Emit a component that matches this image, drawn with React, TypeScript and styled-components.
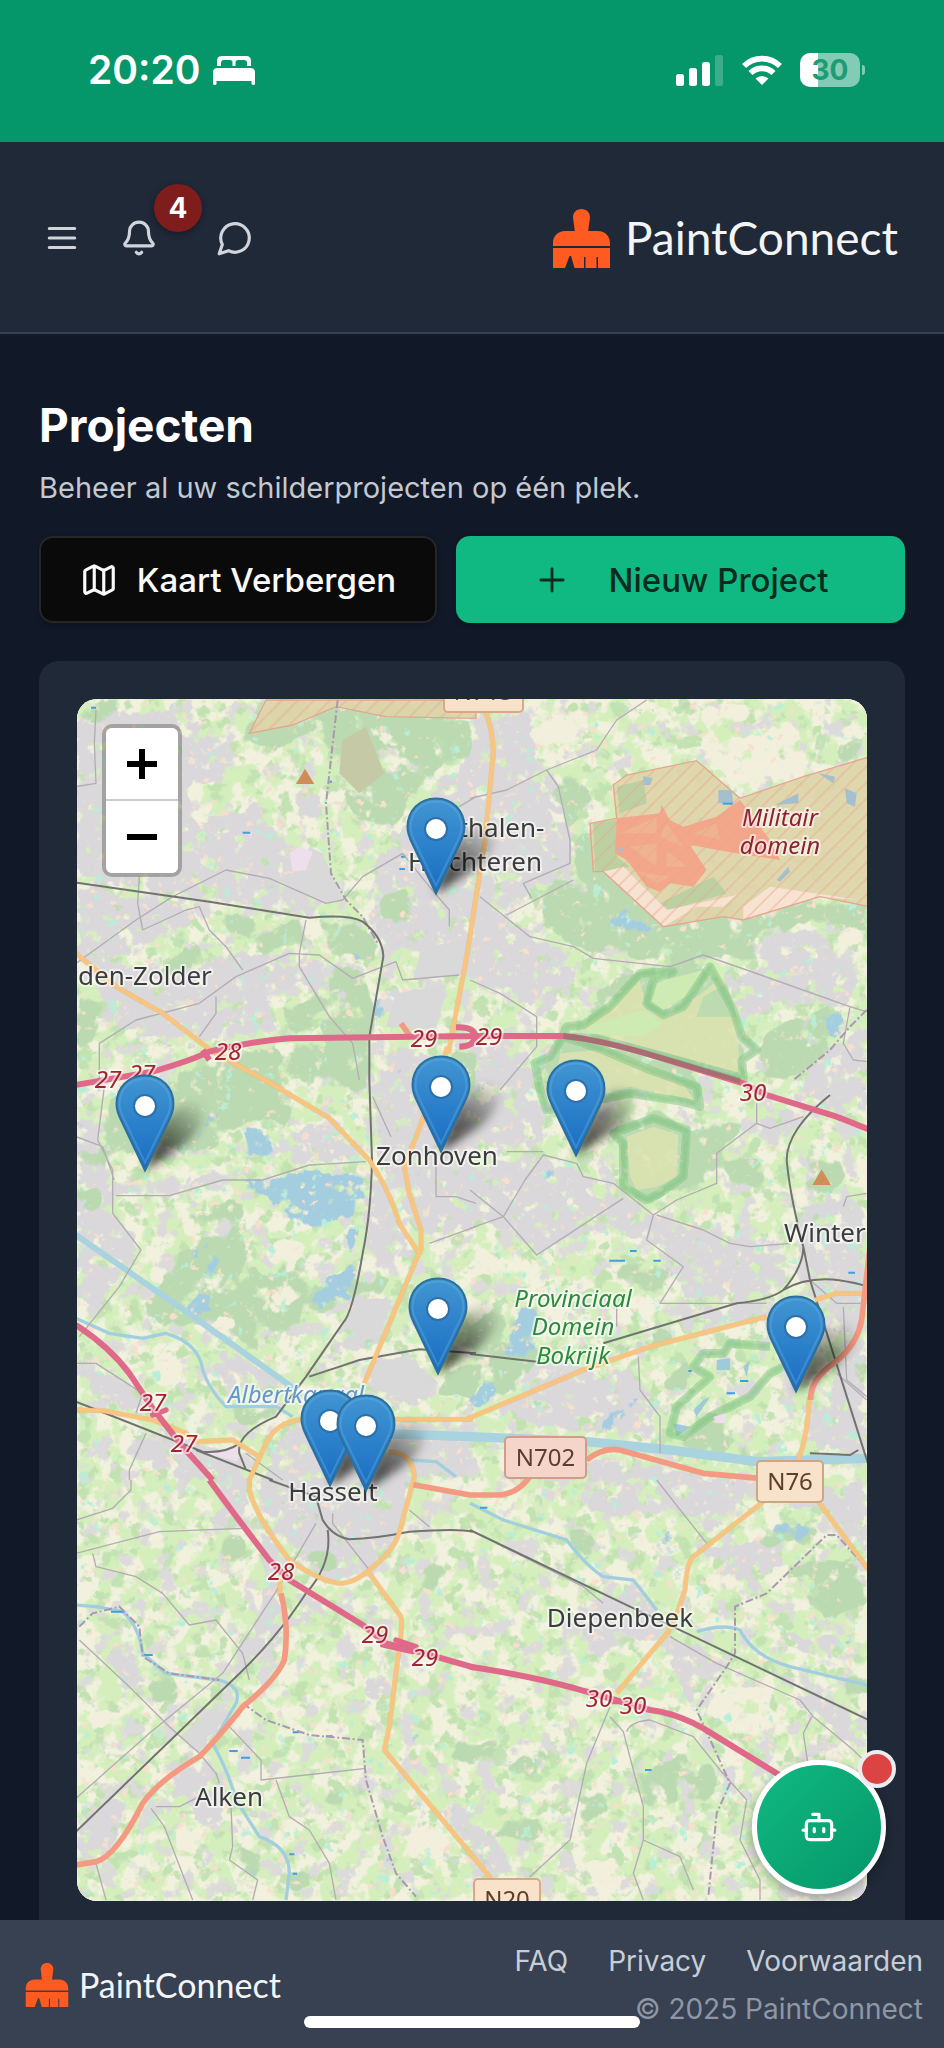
import React from "react";
import styled, { createGlobalStyle } from "styled-components";
import { Bell, Bot, Map as MapIcon, Plus } from "lucide-react";

const GlobalStyle = createGlobalStyle`
  *, *::before, *::after { box-sizing: border-box; }
  body {
    margin: 0;
    background: #111827;
    font-family: Inter, "Liberation Sans", sans-serif;
    -webkit-font-smoothing: antialiased;
  }
  button { font: inherit; color: inherit; border: 0; padding: 0; background: none; cursor: pointer; }
  svg { display: block; flex: none; }
`;

/* ---------- page frame ---------- */

const Page = styled.div`
  display: flex;
  flex-direction: column;
  min-height: 100vh;
`;

const StatusBar = styled.div`
  display: flex;
  align-items: center;
  justify-content: space-between;
  height: 142px;
  padding: 0 84px 2px 88px;
  background: #059669;
  color: #fff;
`;

const StatusGroup = styled.div<{ $gap: number }>`
  display: flex;
  align-items: center;
  gap: ${(p) => p.$gap}px;
`;

const Clock = styled.span`
  font-size: 39px;
  line-height: 48px;
  font-weight: 600;
`;

const Battery = styled.div`
  position: relative;
  width: 60px;
  height: 34px;
  border-radius: 10px;
  background: linear-gradient(90deg, #fff 30%, #82cbb4 30%);
  color: #1b9c73;
  font-size: 28px;
  line-height: 34px;
  font-weight: 700;
  text-align: center;

  &::after {
    content: "";
    position: absolute;
    top: 12px;
    right: -5px;
    width: 3px;
    height: 10px;
    border-radius: 0 4px 4px 0;
    background: #82cbb4;
  }
`;

const Header = styled.header`
  display: flex;
  align-items: center;
  justify-content: space-between;
  height: 192px;
  padding: 2px 46px 0 43px;
  background: #1f2937;
  border-bottom: 2px solid #374151;
`;

const HeaderActions = styled.nav`
  display: flex;
  align-items: center;
  gap: 39px;
  color: #d1d5db;
`;

const IconButton = styled.button<{ $spaced?: boolean }>`
  position: relative;
  display: flex;
  margin-right: ${(p) => (p.$spaced ? 19 : 0)}px;
`;

const Badge = styled.span`
  position: absolute;
  left: 34px;
  bottom: 25px;
  width: 48px;
  height: 48px;
  border-radius: 50%;
  background: #7f1d1d;
  color: #fff;
  font-size: 28px;
  line-height: 48px;
  font-weight: 700;
  text-align: center;
  box-shadow: 0 2px 6px rgba(0, 0, 0, 0.35);
`;

const Brand = styled.a<{ $small?: boolean }>`
  display: flex;
  align-items: center;
  gap: ${(p) => (p.$small ? 10 : 14)}px;
  color: #f3f4f6;
  text-decoration: none;
  font-family: Lato, sans-serif;
  font-size: ${(p) => (p.$small ? 34 : 46)}px;
  line-height: ${(p) => (p.$small ? 44 : 60)}px;
`;

const Main = styled.main`
  display: flex;
  flex-direction: column;
  flex: 1;
  padding: 62px 39px 0;
`;

const Title = styled.h1`
  margin: 0;
  color: #fff;
  font-size: 46px;
  line-height: 58px;
  font-weight: 700;
`;

const Subtitle = styled.p`
  margin: 14px 0 0;
  color: #c3c8d1;
  font-size: 29px;
  line-height: 40px;
`;

const Actions = styled.div`
  display: grid;
  grid-template-columns: 398fr 449fr;
  gap: 19px;
  margin-top: 28px;
`;

const ActionButton = styled.button<{ $primary?: boolean }>`
  display: flex;
  align-items: center;
  justify-content: center;
  gap: ${(p) => (p.$primary ? 38 : 19)}px;
  height: 87px;
  border-radius: 14px;
  border: ${(p) => (p.$primary ? "0" : "2px solid #262626")};
  background: ${(p) => (p.$primary ? "#10b981" : "#0a0a0a")};
  color: ${(p) => (p.$primary ? "#0b2a20" : "#fafafa")};
  font-size: 33px;
  line-height: 40px;
  font-weight: 500;
  box-shadow: 0 2px 5px rgba(0, 0, 0, 0.25);
`;

const MapCard = styled.section`
  flex: 1;
  margin-top: 38px;
  padding: 38px 38px 19px;
  border-radius: 20px 20px 0 0;
  background: #1f2937;
`;

const MapFrame = styled.div`
  position: relative;
  overflow: hidden;
  aspect-ratio: 790 / 1202;
  border-radius: 20px;
  background: #eff1dc;
`;

const MapDrawing = styled.svg`
  width: 100%;
  height: 100%;
`;

const ZoomControl = styled.div`
  position: absolute;
  top: 25px;
  left: 25px;
  display: flex;
  flex-direction: column;
  border: 4px solid rgba(0, 0, 0, 0.25);
  background-clip: padding-box;
  border-radius: 10px;
`;

const ZoomButton = styled.button`
  display: flex;
  align-items: center;
  justify-content: center;
  width: 72px;
  height: 72px;
  background: #fff;
  color: #000;

  &:first-child {
    height: 73px;
    border-bottom: 2px solid #ccc;
    border-radius: 6px 6px 0 0;
  }
  &:last-child {
    border-radius: 0 0 6px 6px;
  }
`;

const PinButton = styled.button<{ $x: number; $y: number }>`
  position: absolute;
  left: ${(p) => (p.$x / 790) * 100}%;
  top: ${(p) => (p.$y / 1202) * 100}%;
  width: 60px;
  height: 98px;
  transform: translate(-50%, -100%);

  svg { overflow: visible; }
`;

const ChatButton = styled.button`
  position: fixed;
  right: 58px;
  bottom: 154px;
  display: flex;
  align-items: center;
  justify-content: center;
  width: 134px;
  height: 134px;
  border: 5px solid #fff;
  border-radius: 50%;
  background: linear-gradient(135deg, #10b981, #059669);
  color: #fff;
  box-shadow: 0 4px 12px rgba(0, 0, 0, 0.3);
`;

const ChatDot = styled.span`
  position: absolute;
  top: -15px;
  right: -15px;
  width: 38px;
  height: 38px;
  border: 4px solid #ececf0;
  border-radius: 50%;
  background: #dc4444;
`;

const Footer = styled.footer`
  position: relative;
  display: flex;
  align-items: center;
  justify-content: space-between;
  height: 128px;
  padding: 2px 21px 0 25px;
  background: #374151;
`;

const FooterInfo = styled.div`
  display: flex;
  flex-direction: column;
  align-items: flex-end;
  gap: 12px;
  color: #8f97a5;
  font-size: 28px;
  line-height: 36px;
`;

const FooterLinks = styled.nav`
  display: flex;
  gap: 40px;
`;

const FooterLink = styled.a`
  color: #c9ced6;
  text-decoration: none;
`;

const HomeIndicator = styled.div`
  position: absolute;
  left: 50%;
  bottom: 20px;
  width: 336px;
  height: 12px;
  border-radius: 6px;
  background: #fff;
  transform: translateX(-50%);
`;

/* ---------- icons ---------- */

const BrushLogo = ({ size }: { size: number }) => (
  <svg width={size} height={size} viewBox="0 0 57 59" fill="#ff5a1f" aria-hidden="true">
    <path d="M20 8.500C20 3.500 23.500 0 28.500 0S37 3.500 37 8.500L35.200 22H45C52 22 57 27 57 34V37H0V34C0 27 5 22 12 22H21.800Z" />
    <path d="M0 39H57V59H45V48H43.500V59H32.500V48H31V59H21.500L18 47H16.500L12 59H0Z" />
  </svg>
);

const BedIcon = () => (
  <svg width="42" height="29" viewBox="0 0 42 29" fill="#fff" aria-hidden="true">
    <path d="M4 10V5Q4 0 9 0H33Q38 0 38 5V10H34V7Q34 4 31 4H25Q22.500 4 22.500 6.500V10H19.500V6.500Q19.500 4 17 4H11Q8 4 8 7V10Z" />
    <path d="M0 16Q0 12 5 12H37Q42 12 42 16V28Q42 29 40.500 29T38.500 28V25H3.500V28Q3.500 29 2 29T0 28Z" />
  </svg>
);

const SignalIcon = () => (
  <svg width="48" height="32" viewBox="0 0 48 32" fill="#fff" aria-hidden="true">
    <rect x="0" y="20" width="8" height="12" rx="2.500" />
    <rect x="13" y="14" width="8" height="18" rx="2.500" />
    <rect x="26" y="8" width="8" height="24" rx="2.500" />
    <rect x="39" y="1" width="8" height="31" rx="2.500" opacity=".22" />
  </svg>
);

const WifiIcon = () => (
  <svg width="40" height="30" viewBox="0 0 40 30" aria-hidden="true">
    <g fill="none" stroke="#fff" strokeWidth="5.800">
      <path d="M2 11A25.500 25.500 0 0 1 38 11" />
      <path d="M8.500 18A16.500 16.500 0 0 1 31.500 18" />
    </g>
    <path d="M13.500 23.600Q20 18.600 26.500 23.600L20 30Z" fill="#fff" />
  </svg>
);

const iconStroke = {
  width: 38,
  height: 38,
  viewBox: "0 0 24 24",
  fill: "none",
  stroke: "currentColor",
  strokeWidth: 2,
  strokeLinecap: "round" as const,
  strokeLinejoin: "round" as const,
};

const MenuIcon = () => (
  <svg {...iconStroke}>
    <path d="M4 6H20M4 12H20M4 18H20" />
  </svg>
);

const MessageIcon = () => (
  <svg {...iconStroke}>
    <path d="M7.900 20A9 9 0 1 0 4 16.100L2 22Z" />
  </svg>
);

const PinIcon = () => (
  <svg width="60" height="98" viewBox="0 0 60 98" aria-hidden="true">
    <path d="M29 97L44 56Q64 22 86 30Q98 46 68 72Z" fill="url(#pin-shade)" filter="url(#pin-shadow)" />
    <path
      d="M30 1.500C13 1.500 1.500 14 1.500 30C1.500 36 3.500 41 6 46L30 96.500L54 46C56.500 41 58.500 36 58.500 30C58.500 14 47 1.500 30 1.500Z"
      fill="url(#pin-body)"
      stroke="#2b6f9f"
      strokeWidth="2"
    />
    <path
      d="M30 4.500C15 4.500 4.500 15.500 4.500 30C4.500 35.500 6.500 40 9 45L30 88.500L51 45C53.500 40 55.500 35.500 55.500 30C55.500 15.500 45 4.500 30 4.500Z"
      fill="none"
      stroke="#6fb2e0"
      strokeWidth="2"
      opacity=".35"
    />
    <circle cx="30" cy="32" r="11" fill="#fff" stroke="#2c70aa" strokeWidth="2" />
  </svg>
);

/* ---------- map data ---------- */

/* Every tile is drawn on a 1200-unit grid at one third of its scale. */
const tiles = {
  nw: [-1, -9],
  ne: [393, -9],
  w: [-1, 381],
  e: [393, 381],
  sw: [-1, 781],
  se: [393, 781],
} as const;
type TileId = keyof typeof tiles;
type Shapes = Partial<Record<TileId, string>>;

const Layer = ({ shapes, ...rest }: { shapes: Shapes } & React.SVGProps<SVGGElement>) => (
  <g {...rest}>
    {(Object.keys(shapes) as TileId[]).map((id) => (
      <path key={id} d={shapes[id]} transform={`translate(${tiles[id][0]} ${tiles[id][1]}) scale(.33333)`} />
    ))}
  </g>
);

const forest: Shapes = {
  nw: "M0 30H140L90 100L0 90ZM540 30H1110V80L1200 80L1180 180L1090 240L1000 330L960 420L850 400L790 300L780 200L700 130L600 190L500 140ZM400 660L540 670L570 710L490 730L400 690ZM500 730L690 690L690 760L560 790ZM720 690L880 700L915 780L860 810L750 780ZM240 840L370 760L400 820L250 880ZM610 950L740 920L750 1010L640 1040ZM0 930L80 950L60 1050L0 1100ZM760 820L870 840L900 960L870 1200H780L740 1050ZM200 1190L300 1150L520 1080L700 1060L870 1100V1170L700 1200ZM900 650L1020 550L1010 700L940 700ZM1130 1090L1200 1080V1200H1130Z",
  ne: "M230 570L430 540L580 690L760 640L1190 640V760L1060 700L870 720L860 810L720 800L620 830L400 800L300 760L210 700ZM300 460L370 400L440 540L330 570ZM1100 180L1190 130V200L1120 210ZM880 1020L1080 950L1140 1020L1000 1150L870 1180ZM440 850L600 830L720 810L820 1000L830 1160L600 1130L300 1020ZM200 1120L290 1040L500 1090L700 1170V1200H200ZM240 300L300 230L380 330L300 420Z",
  w: "M60 250L100 60L300 0H620L680 60L640 130L500 130L360 230L260 200ZM0 190L80 240L0 280ZM310 400L480 350L500 410L340 430ZM200 680L300 520L480 430L560 600L640 540L720 620L830 590L830 660L720 700L640 740L560 830L430 740L260 740ZM450 980L600 980L620 1000L520 1050L460 1020ZM0 330L80 310L90 380L0 420ZM840 590L960 580L900 640L830 640ZM1090 880L1200 840V960L1100 940Z",
  e: "M640 160L740 120L830 130L750 220L740 310L640 330ZM760 230L860 230L900 330L770 300ZM0 720L110 700L190 760L200 860L80 960L0 880ZM380 600L540 520L620 570L560 650L390 640ZM420 800L600 740L610 780L430 830ZM540 880L660 850L640 930L530 940ZM600 1080L720 990L830 1090L840 1120L660 1120ZM420 0H700V60L640 70ZM430 130L560 90L660 140L640 310L540 380L450 310ZM1000 220L1120 240L1110 340L1010 340ZM1130 840H1190V940Z",
  sw: "M370 190L500 170L510 240L430 250ZM1130 770L1200 770V860L1130 830ZM680 180L790 230L760 280L700 240ZM500 1100L570 1130L550 1200L480 1190ZM740 940L820 930L810 980L740 980ZM200 600L330 590L300 680L220 660ZM1020 250L1100 280L1080 340L1030 320ZM640 1170L720 1160L700 1230L640 1240Z",
  se: "M100 850L210 790L260 830L170 900L110 890ZM550 870L640 810L740 850L730 960L640 980L590 950ZM90 1020L210 1000L220 1070L100 1080ZM960 260L1190 230V380L1060 420L1000 360ZM780 180L950 130L1060 150L1000 190L850 200ZM270 120L400 190L390 240L310 220ZM1060 570L1190 590V660L1120 630ZM500 850L560 870L560 1000L510 980ZM0 800L60 760L80 820L0 850ZM300 950L440 940L420 1000L330 1030Z",
};

const urban: Shapes = {
  nw: "M60 60L300 60L470 170L480 260L340 300L350 400L560 330L640 500L720 470L760 630L700 680L400 630L0 570V90ZM640 330L740 300L750 400H650ZM900 500L960 420L1180 180L1200 220V800L1050 780L920 790L880 690ZM1040 760L1190 760V860L1010 870ZM950 900L1110 880L1080 1020L930 1000ZM0 590L380 640L340 700L200 780L150 800L0 800ZM0 800L280 840L500 780L700 800L860 900V960L740 900L600 900L580 1020L400 1060L250 1050L80 1010L60 900ZM420 790L660 790L620 900L430 920ZM1080 1100L1180 1100V1200H1000L900 1180L920 1060Z",
  ne: "M0 70L190 60L210 230L270 280L310 480L300 560L100 660L180 740L310 790L310 860L240 980L190 970L0 880ZM880 720L1060 720L1170 860L1150 950L960 940L820 980L760 860L860 830ZM0 1050L180 1060L200 1200H0ZM1030 1110L1190 1000V1200H970Z",
  w: "M0 60L60 100L110 300L120 400L200 500L130 590L60 700L0 650ZM650 130L760 130L870 240L600 250L500 290L300 340H120L110 310L350 290L640 240ZM890 0L1040 0L1200 60V440L1060 490L1000 420L900 240ZM870 250L940 330L1000 500L1020 540L900 560L860 480ZM830 640L960 650L920 800L830 820L730 850L810 710ZM880 840L1000 830L1080 920L980 990L860 950ZM430 800L600 880L660 930L440 920L400 870ZM680 1030L1200 1030V1200H560L600 1080ZM0 860L130 880L230 1010L60 960ZM180 1050L350 1080L500 1120L520 1200H340L150 1130Z",
  e: "M0 60L160 30L230 100L200 210L60 220L0 180ZM0 260L230 230L380 290L560 410L530 480L380 450L200 520L60 430L0 420ZM560 410L720 450L930 480L940 600L900 650L640 660L630 560L550 500ZM860 130L1080 0H1190V100L1000 110L940 220L880 170ZM1000 360L1190 350V1170L1120 1110L1060 960L1120 800L1060 680L1000 620L980 490ZM240 860L500 870L560 1020L540 1080L340 1060L60 1020ZM640 680L880 660V710L640 780ZM190 1150L430 1130L640 1170L860 1190V1200H190ZM1000 960L1130 960L1140 1110L1000 1110Z",
  sw: "M520 0H1010L980 160L880 270L760 310L660 230L560 120ZM540 140L640 240L600 350L660 440L560 540L430 600L520 450L570 320ZM640 330L720 350L760 420L680 420ZM860 370L960 420L950 480L870 400ZM300 780L440 670L460 700L400 800L340 850ZM250 850L400 830L470 960L420 1070L300 960ZM0 1010L130 950L160 980L100 1130L0 1140ZM100 490L180 500L220 620L160 630L90 560ZM510 150L400 130L430 0H520ZM860 600L950 570L940 680L880 660ZM1080 980L1200 960V1120L1140 1080Z",
  se: "M560 0H870L720 170L560 60ZM880 70L1190 0V240L1060 90ZM320 370L500 310L600 430L560 490L460 480L400 540L310 460ZM560 470L640 480L800 560L640 600L590 560ZM650 200L960 170L940 240L850 340L750 260ZM960 460L1120 460L1130 530L960 520ZM830 540L1190 700V830L1030 710L960 640ZM0 1000L130 1130L180 1190H0ZM620 560L700 640L680 700L640 660ZM300 60L440 0L560 60L450 130ZM1000 1180H1190V1270H1000Z",
};

const water: Shapes = {
  nw: "M780 725L850 740L840 765L790 755ZM810 785L880 800L870 820L810 805ZM900 900L935 915L910 1030L885 1010ZM800 95L815 100L812 150L800 145ZM80 1170L110 1160L80 1200H50Z",
  ne: "M420 665Q460 650 480 680Q540 680 540 710Q530 740 500 725Q430 730 420 690ZM1060 975Q1090 950 1130 980Q1130 1020 1090 1050Q1060 1030 1060 975ZM975 990L990 1000L980 1030L970 1020Z",
  w: "M460 310L700 270L880 290L840 400L740 440L620 410L570 350ZM500 140L560 120L560 180L620 190L560 240L500 200ZM330 160L430 80L445 110L360 160ZM700 660L740 600L840 550L830 650L730 690ZM310 670L400 640L430 690L350 720ZM400 520L450 500L400 620L380 580ZM810 460L860 430L840 500L800 510ZM0 110L80 140L60 160L0 150ZM330 520L400 490L410 510L340 540ZM480 430L520 420L490 480Z",
  e: "M0 920L90 895L60 970L0 980ZM380 1040L440 970L510 950L430 1060ZM140 680L210 680L200 820L90 830L130 740ZM520 570L620 560L600 590L540 590ZM190 290L260 265L240 300Z",
  sw: "M1010 760L1040 770L1030 785ZM190 500L215 480L205 530Z",
  se: "M880 150L940 130L1050 130L1030 160L890 165ZM540 200L590 160L640 145L580 200ZM605 265H630V310H605Z",
};

const cream: Shapes = {
  nw: "M600 220L630 200L640 230L610 250ZM640 850L680 830L670 900ZM350 350L400 340L410 380ZM900 120L960 125L950 170L900 160Z",
  ne: "M160 120L230 60H330L320 200L230 210ZM680 150L900 110L1000 130L1040 230L800 320L650 110ZM700 60L850 40L830 110L700 100ZM1100 740L1190 720V770H1100Z",
  w: "M560 500L640 470L690 510L660 570L600 580ZM570 650L640 620L690 640L620 710L560 690ZM200 560L280 560L260 620L210 610ZM310 410L400 430L360 470ZM180 860L260 820L330 830L350 950L200 900ZM390 710L480 720L460 770L400 750Z",
  e: "M860 240L900 260L950 340L910 340ZM0 520L80 520L130 560L0 600ZM160 610L260 620L220 660H150Z",
  sw: "M960 1080L1050 1000L1130 1080L1100 1150L1000 1130ZM390 260L500 280L470 310L380 300ZM0 700L100 690L90 780L0 770ZM280 1030L400 1080L380 1150L300 1100Z",
  se: "M740 640L820 600L910 640L890 790L780 750L700 690ZM730 280L800 270V340L730 340ZM0 460L100 480L90 540L0 530ZM330 1150L440 1120L460 1240L320 1250ZM1070 290L1090 250L1130 270L1110 310Z",
};

const reserveOutline: Shapes = {
  ne: "M290 1010L340 1005L420 950L510 850L610 845L550 870L530 940L580 975L640 950L720 830L790 960L815 1040L860 1080L815 1110L820 1165L560 1095L380 1045L280 1040ZM280 1040L240 1100L195 1120L210 1200L230 1260L480 1210L640 1235L690 1250L680 1190L540 1140L400 1080Z",
  e: "M430 160L550 115L650 150L640 290L570 340L530 360L460 320L460 190ZM900 800L780 790L760 820L700 820L670 860L720 890L620 980L600 1060L640 1070L720 1010L840 950L900 880L960 850",
};

const minor: Shapes = {
  nw: "M0 290L60 280L55 160L60 60M0 820L180 690L290 620L450 540L580 565L750 640L800 630L860 560L980 490M190 560L185 640L200 720M200 720L330 660L370 650L400 720L450 770L500 840M690 690L670 790V830L760 980L830 1060L850 1170M70 1200V1060L180 990L370 940L480 860L640 790L730 795L830 865L960 815L980 870L1150 855M1150 350L1200 320M980 490L1060 590L1120 660V710M370 1040L420 970V920",
  ne: "M0 325L110 300L230 240L380 180L440 90L530 30M230 240L265 290L300 450V520L160 580L185 625M310 570L110 675M30 620L180 740L310 770L370 805L600 830L700 795L830 840L1140 950L1190 965M0 870L90 910L200 980V1070L90 1200M1140 950L1120 1060L1150 1110L1190 1115",
  w: "M85 20L65 180L110 270V400L195 510L130 620L10 770M0 170L80 200L115 300M120 347H280L440 300H560L700 255L870 245M1080 240V350H1140L1200 370M1060 490L1200 440M890 50L945 170M0 850H60L200 940L180 1000M210 1060L160 1170V1200M510 1120L620 1200",
  e: "M0 330L100 410L200 525L460 355M0 445L100 410L165 300L220 225L320 250L340 290L430 310L550 405L620 360L740 310V220L860 130L900 145L1000 110M860 130V70M550 405L530 480L640 560L570 670H890M560 405L700 450L780 490L840 500L960 490M505 830L510 930L570 1010V1120M1190 340L1130 350L1120 380M440 680V740M110 215H220M1120 680L1130 900L1190 950M1020 600L1100 670H1190M1100 880L1190 960",
  sw: "M0 120L110 85L165 30V0M0 220L250 155L500 145M720 130L600 335L440 580L220 760L0 955M50 220L60 260L180 290L260 340L340 435L420 420L500 520L520 600M10 480L160 620L280 740L370 820L420 880L430 910M460 740L555 840V900L870 865M880 270L770 130V100M600 900L640 1010L700 1050L760 1150L780 1260M465 980L470 1100L460 1140L545 1200L530 1260M240 980H310L370 950M225 985L265 1040L350 1260M60 1150L90 1260M1000 90L1060 140",
  se: "M420 680L350 850L300 1080L180 1190M420 710L460 755L490 870L520 980V1080L490 1180L520 1260M470 755Q480 725 540 720L670 770L750 870L830 960L810 1080L870 1200V1260M600 470L740 550L990 660L1030 710L1150 810L1180 840M1025 710L1000 760L1015 860M560 0L710 190M80 190L340 320L400 370M520 1080L630 1130L670 1230",
};

const boundary: Shapes = {
  nw: "M785 30L750 340L765 550L810 630L860 680L905 760",
  ne: "M1190 960L1140 1010L1080 1080L970 1170",
  sw: "M10 440L50 400L130 380L190 440L200 530L280 580L430 600M500 670L570 720L700 765L860 780L870 900L920 1070L960 1180L1020 1250",
  se: "M1190 265L1100 165H1070L890 340L795 380V520L770 560L680 690L780 910L740 1000L715 1250",
};

const rivers: Shapes = {
  w: "M0 715L100 760L200 775L270 760Q370 790 380 870Q400 930 450 980L600 980L650 1010M1000 1140L1080 1145L1140 1190",
  sw: "M0 375L60 380L140 395Q190 440 200 520L270 580L430 600Q500 620 480 670L410 790Q460 880 480 960L550 1070Q640 1100 640 1180L630 1260",
  se: "M0 70L100 120L290 180Q350 260 400 290L490 300L560 390M680 455Q760 430 810 450Q850 530 960 560L1190 615",
};

const canal: Shapes = {
  w: "M0 465L380 730L660 930",
};

const wideCanal: Shapes = {
  e: "M-240 1062L0 1070L350 1085L600 1110L860 1145L1200 1135",
};

const rail: Shapes = {
  nw: "M0 578L400 635L700 683Q820 672 860 695Q920 740 922 800L880 1040V1170",
  w: "M880 0L888 240Q885 400 860 520Q830 700 800 730L690 890L600 1010Q480 1060 490 1120L510 1170M700 890L850 840L1030 808L1200 820M0 965L380 1115Q450 1120 490 1090M360 1110L590 1200",
  e: "M0 822L200 845M400 790L800 670Q900 660 940 630Q1000 560 1000 500M940 630Q1040 570 1200 622M1080 45Q950 150 950 240Q960 350 1000 500L1020 600L1200 1170M1020 1120L1140 1125L1165 1110",
  sw: "M580 0L720 50L740 120Q770 170 820 178Q900 175 1000 155Q1150 145 1190 155M755 150Q770 250 690 340Q600 480 460 610L0 1055",
  se: "M0 150L480 380L640 455L1200 722",
};

const secondary: Shapes = {
  nw: "M0 790L120 890L260 970L410 1085L620 1200",
  ne: "M45 60Q75 140 68 210L45 450L-10 800L-65 1090",
  w: "M560 -5L760 115L880 240Q940 330 970 430L1025 515M1115 -100L1085 0L1020 170L985 260L1000 340L1035 450V510L1020 540L865 910M1190 1018H680Q600 1025 570 1090L520 1200V1230Q540 1310 640 1440Q740 1510 800 1510Q840 1505 880 1470Q960 1410 975 1340L1015 1190Q1010 1120 940 1115M0 990L80 992L230 1020L330 1060L360 1085L470 1080L550 1130",
  e: "M-10 1018L340 870L540 800L890 710M1035 660L1100 640H1200M1018 950Q1015 1060 985 1140",
  sw: "M880 280L975 410Q980 440 970 500L940 740L925 810L1200 1140L1245 1195M612 290V345",
  se: "M880 65L670 230Q650 250 645 330L625 390L595 455L440 640M1045 65L1200 275",
};

const primary: Shapes = {
  e: "M1200 500L1175 720Q1160 800 1090 850Q1020 900 1022 960M-170 1214L0 1245H80Q140 1245 180 1190M350 1140Q400 1100 450 1110L700 1180L870 1195",
  sw: "M615 340Q640 440 625 540Q600 600 500 680Q430 770 370 830Q250 900 200 970Q120 1130 60 1145L0 1155",
  nw: "M975 1000L1000 1035",
};

const motorway: Shapes = {
  nw: "M0 1185L230 1145Q350 1110 400 1085Q520 1055 640 1045L1200 1038M380 1080L400 1110M1140 1012Q1196 1010 1198 1040Q1196 1068 1150 1070",
  ne: "M0 1038H280Q400 1050 560 1100L820 1180L890 1215L1100 1280L1200 1320",
  w: "M0 735Q100 800 160 880L230 985L320 1100L410 1200",
  sw: "M400 0Q480 110 580 240L640 300L860 435L930 490L1010 510L1195 563",
  se: "M0 560Q200 590 350 635L540 690Q620 700 700 745L920 880L1100 970",
};

const ramps: Shapes = {
  w: "M230 1005L270 990",
  sw: "M920 495L1010 515M960 480L1020 500",
  se: "M430 665H455",
};

const militaryArea: Shapes = {
  ne: "M360 400L440 385L430 285L470 255L680 212L810 325L1000 260L1200 200V650L1050 620L820 690L760 680L580 710L400 545H370Z",
  nw: "M570 30L520 130L650 105L780 50L930 80L1200 85V30Z",
};

const placeLabels: { x: number; y: number; text: string; start?: boolean }[] = [
  { x: 1, y: 286, text: "den-Zolder", start: true },
  { x: 399, y: 138, text: "Houthalen-" },
  { x: 398, y: 172, text: "Helchteren" },
  { x: 360, y: 466, text: "Zonhoven" },
  { x: 707, y: 543, text: "Winter", start: true },
  { x: 256, y: 802, text: "Hasselt" },
  { x: 152, y: 1107, text: "Alken" },
  { x: 543, y: 928, text: "Diepenbeek" },
];

const areaLabels = [
  { x: 703, y: 127, text: "Militair", fill: "#8c2332" },
  { x: 703, y: 155, text: "domein", fill: "#8c2332" },
  { x: 496, y: 608, text: "Provinciaal", fill: "#2c8a3c" },
  { x: 496, y: 636, text: "Domein", fill: "#2c8a3c" },
  { x: 496, y: 665, text: "Bokrijk", fill: "#2c8a3c" },
  { x: 219, y: 704, text: "Albertkanaal", fill: "#6498cc" },
];

const exits: [number, number, string][] = [
  [151, 361, "28"],
  [31, 389, "27"],
  [65, 383, "27"],
  [347, 348, "29"],
  [412, 346, "29"],
  [676, 402, "30"],
  [76, 712, "27"],
  [107, 753, "27"],
  [204, 881, "28"],
  [298, 944, "29"],
  [348, 967, "29"],
  [522, 1008, "30"],
  [556, 1015, "30"],
];

const shields = [
  { x: 428, y: 738, w: 81, text: "N702", fill: "#f5d5ca", stroke: "#d09c8c" },
  { x: 680, y: 762, w: 66, text: "N76", fill: "#f8e2c9", stroke: "#c9a985" },
  { x: 397, y: 1180, w: 66, text: "N20", fill: "#f8e2c9", stroke: "#d9a888" },
  { x: 367, y: -28, w: 79, text: "N715", fill: "#f8e2c9", stroke: "#d9a888" },
];

const pins: [number, number, string][] = [
  [359, 196, "Houthalen-Helchteren"],
  [364, 454, "Zonhoven"],
  [68, 473, "Heusden-Zolder"],
  [499, 458, "Zonhoven oost"],
  [361, 676, "Hasselt noord"],
  [719, 694, "Genk"],
  [253, 788, "Hasselt centrum"],
  [289, 793, "Hasselt"],
];

/* Turns soft shapes into ragged land-cover patches of one colour. */
const CoverFilter = ({
  id,
  rgb,
  seed,
  frequency,
  weight,
  threshold,
}: {
  id: string;
  rgb: [number, number, number];
  seed: number;
  frequency: number;
  weight: number;
  threshold: number;
}) => {
  const [r, g, b] = rgb.map((v) => v / 255);
  return (
    <filter id={id} filterUnits="userSpaceOnUse" x="0" y="0" width="790" height="1202" colorInterpolationFilters="sRGB">
      <feTurbulence type="fractalNoise" baseFrequency={frequency} numOctaves={4} seed={seed} />
      <feColorMatrix values="0 0 0 0 0  0 0 0 0 0  0 0 0 0 0  1 0 0 0 0" result="noise" />
      <feGaussianBlur in="SourceAlpha" stdDeviation="4" result="density" />
      <feComposite in="noise" in2="density" operator="arithmetic" k1="0" k2="1" k3={weight} k4="0" />
      <feColorMatrix values={`0 0 0 0 ${r}  0 0 0 0 ${g}  0 0 0 0 ${b}  0 0 0 9 ${-9 * threshold}`} />
    </filter>
  );
};

const RegionMap = () => (
  <MapDrawing viewBox="0 0 790 1202" preserveAspectRatio="xMidYMid slice" role="img" aria-label="Kaart met projecten">
    <defs>
      <CoverFilter id="cover-grass" rgb={[212, 239, 188]} seed={4} frequency={0.045} weight={0.3} threshold={0.58} />
      <CoverFilter id="cover-scrub" rgb={[194, 226, 178]} seed={21} frequency={0.06} weight={0.3} threshold={0.71} />
      <CoverFilter id="cover-street" rgb={[220, 218, 219]} seed={70} frequency={0.05} weight={0.3} threshold={0.73} />
      <CoverFilter id="cover-forest" rgb={[188, 218, 177]} seed={9} frequency={0.04} weight={0.5} threshold={0.78} />
      <CoverFilter id="cover-urban" rgb={[218, 216, 218]} seed={15} frequency={0.07} weight={0.5} threshold={0.8} />
      <CoverFilter id="cover-water" rgb={[165, 205, 224]} seed={33} frequency={0.06} weight={0.6} threshold={0.84} />
      <CoverFilter id="cover-cream" rgb={[242, 240, 220]} seed={40} frequency={0.05} weight={0.5} threshold={0.78} />
      <CoverFilter id="cover-peach" rgb={[248, 222, 205]} seed={52} frequency={0.09} weight={0.3} threshold={0.84} />
      <CoverFilter id="cover-mint" rgb={[184, 238, 216]} seed={61} frequency={0.07} weight={0.3} threshold={0.86} />
      <pattern id="hatch" width="34" height="34" patternUnits="userSpaceOnUse" patternTransform="rotate(45)">
        <path d="M17 0V34" stroke="#e6a68a" strokeWidth="5" opacity=".45" />
      </pattern>
      <linearGradient id="pin-body" x1="0" y1="0" x2="0" y2="1">
        <stop offset="0" stopColor="#4296d2" />
        <stop offset=".55" stopColor="#2a7fca" />
        <stop offset="1" stopColor="#1a6dc2" />
      </linearGradient>
      <linearGradient id="pin-shade" gradientUnits="userSpaceOnUse" x1="32" y1="95" x2="84" y2="34">
        <stop offset="0" stopColor="#000" stopOpacity=".8" />
        <stop offset=".5" stopColor="#000" stopOpacity=".5" />
        <stop offset="1" stopColor="#000" stopOpacity=".06" />
      </linearGradient>
      <filter id="pin-shadow" x="-40%" y="-40%" width="180%" height="180%">
        <feGaussianBlur stdDeviation="5" />
      </filter>
    </defs>

    <rect width="790" height="1202" fill="#f1f1dd" />
    <g filter="url(#cover-grass)">
      <rect width="790" height="1202" fillOpacity=".5" />
    </g>
    <g filter="url(#cover-scrub)">
      <rect width="790" height="1202" fillOpacity=".5" />
    </g>
    <g filter="url(#cover-street)">
      <rect width="790" height="1202" fillOpacity=".5" />
    </g>
    <Layer shapes={urban} filter="url(#cover-urban)" />
    <Layer shapes={forest} filter="url(#cover-forest)" />
    <Layer shapes={cream} filter="url(#cover-cream)" />
    <Layer shapes={water} filter="url(#cover-water)" />
    <g filter="url(#cover-peach)">
      <rect width="790" height="1202" fillOpacity=".5" />
    </g>
    <g filter="url(#cover-mint)">
      <rect width="790" height="1202" fillOpacity=".5" />
    </g>
    <Layer
      shapes={{
        nw: "M650 560L700 470L740 490L765 550L800 630L750 640L580 560ZM1040 770L1190 750V850L1010 870ZM960 910L1110 885L1080 1020L930 1010Z",
        w: "M850 655L950 660L900 780L820 750ZM890 850L990 830L1080 900L1050 960L890 930Z",
        sw: "M310 770L430 670L420 720L370 820Z",
      }}
      fill="#dad9d9"
    />

    <Layer shapes={{ nw: "M800 150L870 110L925 250L850 310L790 250Z" }} fill="#c6c9a6" />
    <Layer shapes={militaryArea} fill="#dfd4aa" fillOpacity=".9" />
    <Layer shapes={{ ne: "M370 400L440 390V500L480 530L400 545H375ZM440 290L520 270L530 340L450 370ZM570 640L730 560L770 610L600 660Z" }} fill="#bcd0a2" />
    <Layer shapes={{ ne: "M400 545L460 530L590 660L800 615L760 650L680 650L580 710ZM820 650L900 590L1170 630L1040 620L820 690Z" }} fill="#f8e3d2" />
    <Layer
      shapes={{ ne: "M440 385L570 370L575 345L600 390L640 410L740 380L810 330L900 450L930 510L800 490L660 465L710 540L670 590L600 580L570 605L530 590L470 510L435 490Z" }}
      fill="#f3a68a"
    />
    <Layer
      shapes={{ ne: "M450 430L560 380V430ZM590 400L640 470L570 440ZM480 470L560 460V530ZM590 480L650 530H590ZM670 430L740 400L750 450ZM500 545L600 560L560 580Z" }}
      fill="#eeb794"
      fillOpacity=".8"
    />
    <Layer shapes={militaryArea} fill="url(#hatch)" stroke="#e5a68f" strokeWidth="4" />
    <Layer shapes={{ ne: "M745 300L785 300L790 340L745 340ZM1125 295L1160 310L1155 350L1130 340ZM915 345L985 310L985 340ZM1045 250L1095 260L1090 280ZM920 570L955 530L960 545L930 575ZM520 258L548 265L540 285H520ZM440 480L465 470L450 488Z" }} fill="#a4bfce" />

    <Layer
      shapes={{
        ne: "M330 1020L510 870L530 960L600 980L760 860L800 980L810 1150L560 1080ZM270 1090L380 1080L500 1110L640 1180L670 1230L480 1190L250 1240Z",
        e: "M470 170L550 140L625 165L620 290L560 320L500 330L480 290Z",
      }}
      fill="#dfe2b0"
      fillOpacity=".8"
    />
    <Layer shapes={{ ne: "M550 880L700 840L680 900L580 960L540 940ZM350 1010L520 960L580 1000L520 1040L350 1030Z" }} fill="#cdebb2" />
    <Layer shapes={{ ne: "M700 920L770 880L800 980L680 980Z" }} fill="#bddbb0" />
    <Layer shapes={{ e: "M740 840L780 835V870L740 870ZM610 1030L660 1040L620 1070ZM700 960L720 950L680 1010L670 990ZM820 860L840 840L830 890Z" }} fill="#9fcbd8" />
    <Layer shapes={reserveOutline} fill="none" stroke="#7fc683" strokeWidth="26" strokeLinejoin="round" strokeOpacity=".5" />
    <Layer shapes={reserveOutline} fill="none" stroke="#6db873" strokeWidth="12" strokeLinejoin="round" strokeOpacity=".2" />
    <Layer shapes={{ nw: "M640 490L670 470L710 485L690 540L650 545Z", w: "M390 1120L490 1095L485 1145Z", e: "M730 1010L770 1000L765 1030L740 1030Z" }} fill="#eedfec" />

    <Layer shapes={rivers} fill="none" stroke="#a2cfdf" strokeWidth="10" />
    <Layer shapes={canal} fill="none" stroke="#a9d3df" strokeWidth="18" />
    <Layer shapes={wideCanal} fill="none" stroke="#a9d3df" strokeWidth="28" />
    <Layer
      shapes={{
        nw: "M45 53H60M500 428H523M975 500H990M970 537H987M760 275H768",
        ne: "M758 341H788",
        e: "M418 542H465M480 513H500M550 542H572M655 873H665M810 903H835M770 940H795M1135 578H1155",
        sw: "M105 395H143M205 525H230M460 813H485M495 833H522M640 1123H655M650 1181H663M650 757H670M750 769H770",
        se: "M30 83H52M525 870H545",
      }}
      stroke="#3f9fe0"
      strokeWidth="6"
    />
    <Layer shapes={minor} fill="none" stroke="#b3acb5" strokeWidth="4" strokeLinejoin="round" />
    <Layer shapes={boundary} fill="none" stroke="#ab98b0" strokeWidth="6" strokeDasharray="24 8 6 8" />
    <Layer shapes={rail} fill="none" stroke="#70736f" strokeWidth="6" />
    <Layer shapes={secondary} fill="none" stroke="#dda768" strokeWidth="16" strokeLinejoin="round" strokeOpacity=".4" />
    <Layer shapes={secondary} fill="none" stroke="#f8c581" strokeWidth="13" strokeLinejoin="round" />
    <Layer shapes={primary} fill="none" stroke="#f59a82" strokeWidth="17" strokeLinejoin="round" />
    <Layer shapes={motorway} fill="none" stroke="#e0698a" strokeWidth="18" strokeLinejoin="round" />
    <Layer shapes={ramps} fill="none" stroke="#e0698a" strokeWidth="16" strokeLinecap="round" />
    <Layer shapes={{ ne: "M280 1038Q400 1050 560 1100L810 1172" }} fill="none" stroke="#7a7060" strokeOpacity=".55" strokeWidth="16" />
    <Layer shapes={{ nw: "M660 282L687 236L715 282Z", e: "M1027 315L1055 268L1083 315Z" }} fill="#d08d58" />

    {shields.map((s) => (
      <g key={s.text}>
        <rect x={s.x} y={s.y} width={s.w} height="41" rx="4" fill={s.fill} stroke={s.stroke} strokeWidth="2" />
        <text x={s.x + s.w / 2} y={s.y + 29} textAnchor="middle" fontFamily="Noto Sans, sans-serif" fontSize="24" fill="#5d3d2c">
          {s.text}
        </text>
      </g>
    ))}

    <g fontFamily="Noto Sans, sans-serif" fontSize="26" fill="#3c3c3c" stroke="#fff" strokeOpacity=".6" strokeWidth="4" strokeLinejoin="round" paintOrder="stroke">
      {placeLabels.map((l) => (
        <text key={l.text} x={l.x} y={l.y} textAnchor={l.start ? "start" : "middle"}>
          {l.text}
        </text>
      ))}
    </g>
    <g fontFamily="Noto Sans, sans-serif" fontSize="24" fontStyle="italic" textAnchor="middle" stroke="#fff" strokeOpacity=".6" strokeWidth="4" strokeLinejoin="round" paintOrder="stroke">
      {areaLabels.map((l) => (
        <text key={l.text} x={l.x} y={l.y} fill={l.fill}>
          {l.text}
        </text>
      ))}
      {exits.map(([x, y, text]) => (
        <text key={`${x}-${y}`} x={x} y={y} fill="#a3232f">
          {text}
        </text>
      ))}
    </g>
  </MapDrawing>
);

const ProjectMap = () => (
  <MapFrame>
    <RegionMap />
    {pins.map(([x, y, name]) => (
      <PinButton key={name} type="button" aria-label={name} $x={x} $y={y}>
        <PinIcon />
      </PinButton>
    ))}
    <ZoomControl>
      <ZoomButton type="button" aria-label="Inzoomen">
        <svg width="30" height="30" viewBox="0 0 30 30" stroke="currentColor" strokeWidth="6">
          <path d="M0 15H30M15 0V30" />
        </svg>
      </ZoomButton>
      <ZoomButton type="button" aria-label="Uitzoomen">
        <svg width="30" height="30" viewBox="0 0 30 30" stroke="currentColor" strokeWidth="6">
          <path d="M0 15H30" />
        </svg>
      </ZoomButton>
    </ZoomControl>
  </MapFrame>
);

export default function App() {
  return (
    <Page>
      <GlobalStyle />
      <StatusBar>
        <StatusGroup $gap={12}>
          <Clock>20:20</Clock>
          <BedIcon />
        </StatusGroup>
        <StatusGroup $gap={18}>
          <SignalIcon />
          <WifiIcon />
          <Battery>30</Battery>
        </StatusGroup>
      </StatusBar>

      <Header>
        <HeaderActions>
          <IconButton type="button" aria-label="Menu">
            <MenuIcon />
          </IconButton>
          <IconButton type="button" aria-label="Meldingen" $spaced>
            <Bell size={38} />
            <Badge>4</Badge>
          </IconButton>
          <IconButton type="button" aria-label="Berichten">
            <MessageIcon />
          </IconButton>
        </HeaderActions>
        <Brand href="#">
          <BrushLogo size={59} />
          PaintConnect
        </Brand>
      </Header>

      <Main>
        <Title>Projecten</Title>
        <Subtitle>Beheer al uw schilderprojecten op één plek.</Subtitle>
        <Actions>
          <ActionButton type="button">
            <MapIcon size={38} />
            Kaart Verbergen
          </ActionButton>
          <ActionButton type="button" $primary>
            <Plus size={38} strokeWidth={1.8} />
            Nieuw Project
          </ActionButton>
        </Actions>
        <MapCard>
          <ProjectMap />
        </MapCard>
      </Main>

      <Footer>
        <Brand href="#" $small>
          <BrushLogo size={44} />
          PaintConnect
        </Brand>
        <FooterInfo>
          <FooterLinks>
            <FooterLink href="#faq">FAQ</FooterLink>
            <FooterLink href="#privacy">Privacy</FooterLink>
            <FooterLink href="#voorwaarden">Voorwaarden</FooterLink>
          </FooterLinks>
          <span>© 2025 PaintConnect</span>
        </FooterInfo>
        <HomeIndicator />
      </Footer>

      <ChatButton type="button" aria-label="Open chatassistent">
        <Bot size={38} />
        <ChatDot />
      </ChatButton>
    </Page>
  );
}
